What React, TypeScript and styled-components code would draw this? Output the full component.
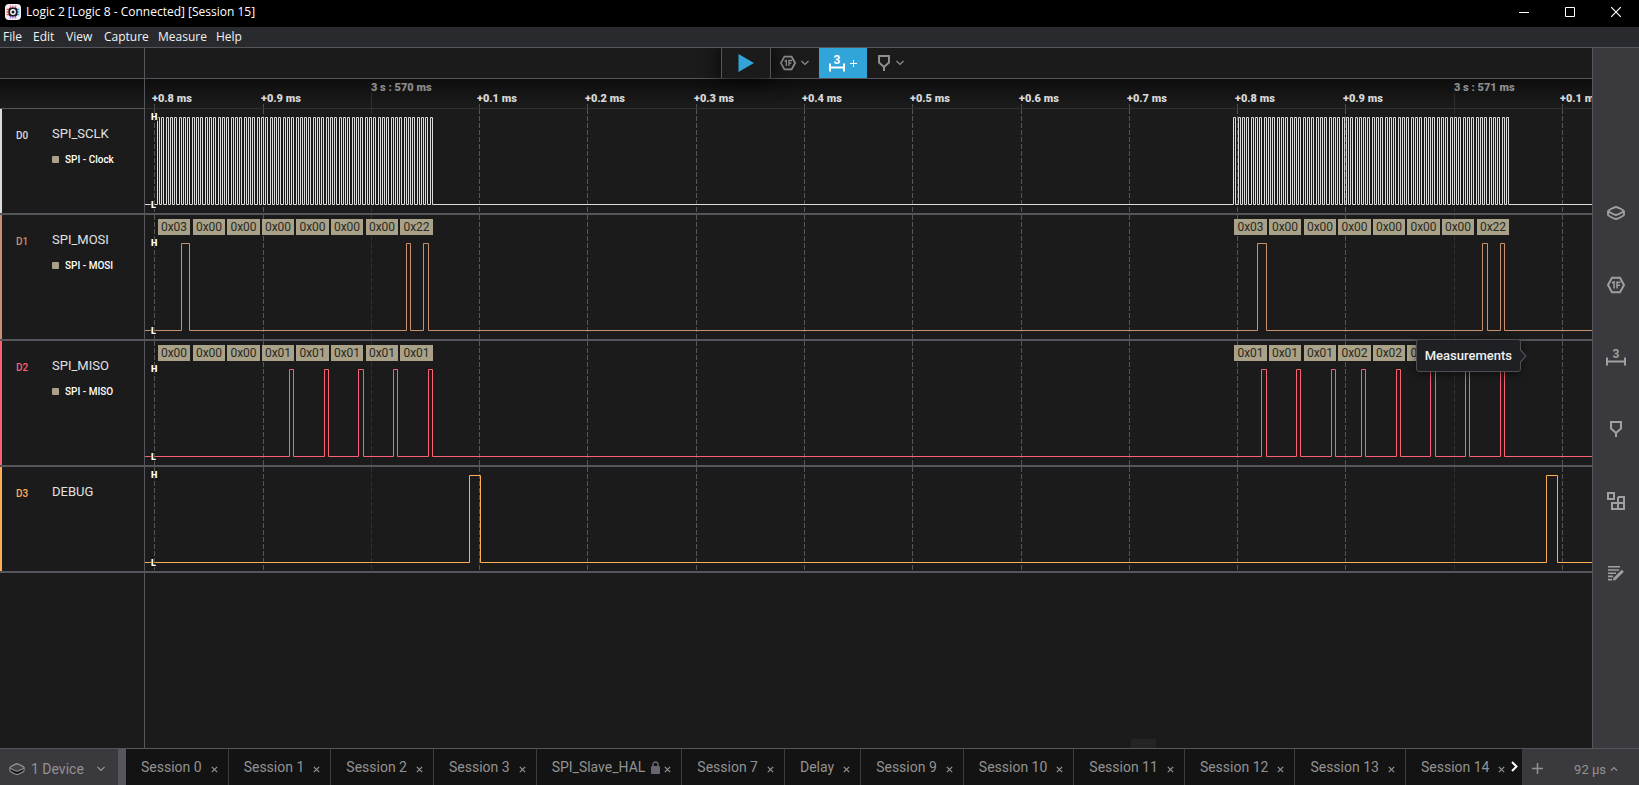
import React from "react";
import styled, { createGlobalStyle, css } from "styled-components";

const GlobalStyle = createGlobalStyle`
  * { box-sizing: border-box; }
  body { margin: 0; background: #1b1b1b; font-family: Roboto, "Liberation Sans", sans-serif; }
  button { margin: 0; padding: 0; border: 0; background: none; color: inherit; font: inherit; cursor: pointer; }
`;

const line = "#55555b";

const Window = styled.div`
  display: flex;
  flex-direction: column;
  min-height: 100vh;
  overflow: hidden;
  color: #e0e0e0;
`;

const TitleBar = styled.header`
  display: flex;
  align-items: center;
  height: 27px;
  padding: 0 0 4px 5px;
  background: #000;
  color: #fff;
`;

const Title = styled.h1`
  flex: 1;
  margin: 0;
  padding-left: 5px;
  font: 400 12px/16px "Open Sans", "Noto Sans", sans-serif;
`;

const WindowButton = styled.button`
  display: flex;
  align-items: center;
  justify-content: center;
  width: 46px;
  height: 22px;
`;

const MenuBar = styled.nav`
  display: flex;
  height: 21px;
  background: #292a2e;
  border-bottom: 1px solid ${line};
`;

const MenuItem = styled.button<{ $width: number }>`
  width: ${(p) => p.$width}px;
  padding-left: 3px;
  text-align: left;
  color: #f2f2f2;
  font: 400 12px/20px "Open Sans", "Noto Sans", sans-serif;
`;

const Body = styled.div`
  display: flex;
  flex: 1;
`;

const Main = styled.main`
  display: flex;
  flex-direction: column;
  flex: 1;
  min-width: 0;
`;

const Gutter = styled.div`
  flex: none;
  width: 145px;
  border-right: 1px solid ${line};
`;

const ToolbarRow = styled.div`
  display: flex;
  height: 31px;
  border-bottom: 1px solid ${line};
`;

const Toolbar = styled.div`
  display: flex;
  flex: 1;
  justify-content: center;
`;

const ToolGroup = styled.div`
  display: flex;
  width: 296px;
`;

const ToolButton = styled.button<{ $kind?: "play" | "active" }>`
  display: flex;
  align-items: center;
  justify-content: center;
  gap: 5px;
  width: 48px;
  height: 30px;
  color: #8f8f8f;
  ${(p) =>
    p.$kind === "play" &&
    css`
      width: 50px;
      border: solid ${line};
      border-width: 0 1px;
      color: #31a4d9;
      box-shadow: 0 0 20px 2px rgba(0, 0, 0, 0.8);
      clip-path: inset(0 -30px -30px -30px);
    `}
  ${(p) =>
    p.$kind === "active" &&
    css`
      background: #31a4d9;
      color: #fff;
    `}
`;

const RulerRow = styled.div`
  display: flex;
  height: 30px;
  background: linear-gradient(#0d0d0d, #1b1b1b 26px);
`;

const RulerGutter = styled(Gutter)`
  border-bottom: 1px solid ${line};
`;

const Ruler = styled.div`
  position: relative;
  flex: 1;
  overflow: hidden;
  border-bottom: 1px solid #303035;
`;

const TickLabel = styled.span<{ $major?: boolean }>`
  position: absolute;
  top: ${(p) => (p.$major ? 2 : 13)}px;
  color: ${(p) => (p.$major ? "#8d8d8d" : "#d8d8d8")};
  font-size: 11px;
  line-height: 13px;
  font-weight: 900;
  white-space: pre;
`;

const Tick = styled.i<{ $major?: boolean }>`
  position: absolute;
  top: ${(p) => (p.$major ? 14 : 25)}px;
  bottom: 0;
  width: 1px;
  background: ${(p) => (p.$major ? "#2e2e2e" : "#4c4c4c")};
`;

const ChannelRow = styled.section<{ $tall?: boolean }>`
  display: flex;
  height: ${(p) => (p.$tall ? 126 : 106)}px;
  border-bottom: 2px solid ${line};
`;

const ChannelHead = styled(Gutter)<{ $color: string }>`
  display: grid;
  grid-template-columns: 36px 1fr;
  grid-template-rows: 16px 16px;
  align-items: center;
  row-gap: 10px;
  padding: 16px 0 0 14px;
  border-left: 2px solid ${(p) => p.$color};
`;

const ChannelId = styled.span<{ $color: string }>`
  padding-top: 4px;
  color: ${(p) => p.$color};
  font-size: 10px;
  font-weight: 500;
`;

const ChannelName = styled.span`
  color: #e2e2e2;
  font-size: 13px;
`;

const AnalyzerTag = styled.span`
  display: flex;
  grid-column: 2;
  align-items: center;
  gap: 6px;
  color: #fff;
  font-size: 10px;
  font-weight: 500;
  &::before {
    content: "";
    width: 7px;
    height: 7px;
    border-radius: 1px;
    background: #a9a288;
  }
`;

const Track = styled.div`
  position: relative;
  flex: 1;
  overflow: hidden;
`;

const Plot = styled.svg`
  display: block;
  width: 100%;
  height: 100%;
`;

const LevelMark = styled.span<{ $at: number }>`
  position: absolute;
  top: ${(p) => p.$at - 5}px;
  left: 6px;
  color: #fff;
  font-size: 9px;
  line-height: 11px;
  font-weight: 900;
  text-shadow: 0 0 2px #1b1b1b, 0 0 2px #1b1b1b, 1px 1px 1px #1b1b1b;
`;

const Byte = styled.span`
  position: absolute;
  top: 4px;
  height: 16px;
  background: #a9a288;
  color: #2a2922;
  font-size: 12px;
  line-height: 16px;
  text-align: center;
`;

const Rest = styled.div`
  display: flex;
  flex: 1;
`;

const ScrollArea = styled.div`
  display: flex;
  flex: 1;
  align-items: flex-end;
`;

const ScrollThumb = styled.div`
  width: 25px;
  height: 9px;
  margin-left: 68.15%;
  background: #242424;
`;

const Sidebar = styled.aside`
  display: flex;
  flex: none;
  flex-direction: column;
  justify-content: center;
  width: 47px;
  padding-bottom: 10px;
  border-left: 1px solid ${line};
  background: #3a393e;
`;

const PanelButton = styled.button`
  position: relative;
  display: flex;
  align-items: center;
  justify-content: center;
  height: 72px;
  color: #a0a0a0;
`;

const Tooltip = styled.span`
  position: absolute;
  right: calc(100% + 72px);
  top: 18px;
  height: 33px;
  padding: 0 8px;
  border: 1px solid #4e4f55;
  border-radius: 3px;
  background: #1f2024;
  box-shadow: 0 2px 8px rgba(0, 0, 0, 0.5);
  color: #f0f0f0;
  font-size: 13px;
  line-height: 31px;
  font-weight: 500;
`;

const TooltipArrow = styled.svg`
  position: absolute;
  left: 100%;
  top: 9px;
`;

const StatusBar = styled.footer`
  display: flex;
  height: 37px;
  border-top: 1px solid ${line};
  background: #131313;
  color: #929292;
  font-size: 14px;
`;

const DeviceButton = styled.button`
  display: flex;
  flex: none;
  align-items: center;
  width: 126px;
  padding: 4px 0 0 9px;
  gap: 6px;
  border-right: 8px solid ${line};
  background: #3a393e;
  > svg:last-child { margin-left: 7px; }
`;

const Tabs = styled.div`
  display: flex;
  flex: 1;
  min-width: 0;
  overflow: hidden;
`;

const Tab = styled.div`
  display: flex;
  flex: none;
  align-items: center;
  height: 36px;
  padding: 0 10px 0 15px;
  border-right: 1px solid #3c3c40;
  &:last-child { border: 0; }
`;

const TabClose = styled.button`
  display: flex;
  padding: 4px 0 0 9px;
`;

const Lock = styled.svg`
  margin: 0 -5px 0 6px;
`;

const TabScroll = styled.button`
  flex: none;
  width: 12px;
  padding-right: 3px;
  color: #fff;
`;

const Controls = styled.div`
  display: flex;
  flex: none;
  align-items: center;
  justify-content: space-between;
  width: 117px;
  padding: 4px 21px 0 10px;
  background: #3a393e;
  font-size: 13px;
`;

const Zoom = styled.button`
  display: flex;
  align-items: center;
  gap: 4px;
`;

const Chevron = ({ up }: { up?: boolean }) => (
  <svg width="8" height="6" viewBox="0 0 8 6" fill="none" stroke="currentColor" strokeWidth="1.2">
    <path d={up ? "M1 4.5 4 1.5 7 4.5" : "M0.5 1 4 4.5 7.5 1"} />
  </svg>
);

const HexIcon = ({ size }: { size: number }) => (
  <svg width={size} height={size} viewBox="0 0 18 18" fill="none" stroke="currentColor">
    <path d="M5 1.800h8L17 9l-4 7.200H5L1 9Z" strokeWidth="2" />
    <path d="M5 7 7.100 5.900V12.500M10 12.500V6.200h3.500M10 9.200h3" strokeWidth="1.500" />
  </svg>
);

const MeasureIcon = ({ width = 20 }: { width?: number }) => (
  <svg width={width} height="18" viewBox={`0 0 ${width} 18`} fill="none" stroke="currentColor">
    <path d={`M1 9.500v8M${width - 1} 9.500v8M1 13.500h${width - 2}`} strokeWidth="2" />
    <text x={width / 2} y="9.500" textAnchor="middle" fill="currentColor" stroke="none" fontSize="12" fontWeight="700">
      3
    </text>
  </svg>
);

const PinIcon = () => (
  <svg width="14" height="18" viewBox="0 0 14 18" fill="none" stroke="currentColor" strokeWidth="2">
    <path d="M2 2h10v6.500l-5 4.500-5-4.500ZM7 13v4" />
  </svg>
);

const StackIcon = ({ size = 18, dark }: { size?: number; dark?: boolean }) => (
  <svg width={size} height={(size * 14) / 18} viewBox="0 0 18 14" fill="none" stroke="currentColor" strokeWidth={dark ? 1.2 : 1.800}>
    <path
      d="M1 5.300C1 4.300 7.500 1 9 1s8 3.300 8 4.300v3.400c0 1-6.500 4.300-8 4.300S1 9.700 1 8.700Z"
      fill={dark ? "#18181a" : "none"}
    />
    <path
      d={dark ? "M1 5.300C1 4.300 7.500 1 9 1s8 3.300 8 4.300-6.500 3.900-8 3.900-8-2.900-8-3.900Z" : "M1.500 5.500C2.500 6.300 7.500 9 9 9s6.500-2.700 7.500-3.500"}
      fill={dark ? "#444448" : "none"}
    />
  </svg>
);

const BlocksIcon = () => (
  <svg width="18" height="18" viewBox="0 0 18 18" fill="none" stroke="currentColor" strokeWidth="2">
    <path d="M1 1h6v6H1ZM11 5h6v12H5v-6h12M11 5v12" />
  </svg>
);

const NotesIcon = () => (
  <svg width="16" height="16" viewBox="0 0 16 16" fill="none" stroke="currentColor" strokeWidth="1.600">
    <path d="M0 1.800h12M0 5h11M0 8.200h8M0 11.400h5M0 14.600h4" />
    <path d="M7 13.500 14.800 5.700" strokeWidth="3" />
    <path d="M5 15.500 8.400 15 5.500 12.100Z" fill="currentColor" stroke="none" />
  </svg>
);

const CloseGlyph = () => (
  <svg width="7" height="7" viewBox="0 0 7 7" stroke="currentColor" strokeWidth="1.200">
    <path d="M0.800 0.800 6.200 6.200M6.200 0.800 0.800 6.200" />
  </svg>
);

const Logo = () => (
  <svg width="16" height="16" viewBox="0 0 16 16">
    <rect width="16" height="16" rx="4" fill="#f2f2f6" />
    <g strokeWidth="1.400">
      <path d="M5.500 1.500v3M8 1.500v3M10.500 1.500v3" stroke="#ef7c8b" />
      <path d="M5.500 11.500v3M8 11.500v3M10.500 11.500v3" stroke="#b26be8" />
      <path d="M1.500 5.500h3M1.500 8h3M1.500 10.500h3" stroke="#ee5a4a" />
      <path d="M11.500 5.500h3M11.500 8h3M11.500 10.500h3" stroke="#3b9fe6" />
    </g>
    <rect x="3.500" y="3.500" width="9" height="9" rx="3" fill="#17171c" />
    <circle cx="8" cy="8" r="2.200" fill="none" stroke="#fff" strokeWidth="1.400" />
  </svg>
);

/* Time axis: pixel position of the first division and the pixels per 0.1 ms. */
const AXIS_START = 9.3;
const DIVISION = 108.28;
const divisions = Array.from({ length: 14 }, (_, i) => {
  const step = (i + 8) % 10;
  return {
    x: Math.round(AXIS_START + DIVISION * i),
    major: step === 0,
    label: step === 0 ? `3 s : ${i < 10 ? 570 : 571} ms` : `+0.${step} ms`,
  };
});

/* Eight bytes of eight clock pulses, each pulse two pixels wide. */
const clockBurst = (start: number): [number, number][] =>
  Array.from({ length: 64 }, (_, k) => {
    const rise = Math.round(start + 4.325 * k);
    return [rise, rise + 2];
  });

const BYTE_PITCH = 34.6;
const bytesAt = (start: number, values: string[]) =>
  values.map((value, i) => {
    const left = Math.round(start + BYTE_PITCH * i);
    return { value, left, width: Math.round(start + BYTE_PITCH * i + 32.4) - left };
  });

type Channel = {
  id: string;
  name: string;
  analyzer?: string;
  color: string;
  pulses: [number, number][];
  bytes?: ReturnType<typeof bytesAt>;
};

const channels: Channel[] = [
  {
    id: "D0",
    name: "SPI_SCLK",
    analyzer: "SPI - Clock",
    color: "#dcdcdc",
    pulses: [...clockBurst(12.1), ...clockBurst(1088.4)],
  },
  {
    id: "D1",
    name: "SPI_MOSI",
    analyzer: "SPI - MOSI",
    color: "#c9906f",
    pulses: [[36, 44], [261, 265], [278, 283], [1112, 1121], [1337, 1342], [1355, 1359]],
    bytes: [
      ...bytesAt(13, ["0x03", "0x00", "0x00", "0x00", "0x00", "0x00", "0x00", "0x22"]),
      ...bytesAt(1089.3, ["0x03", "0x00", "0x00", "0x00", "0x00", "0x00", "0x00", "0x22"]),
    ],
  },
  {
    id: "D2",
    name: "SPI_MISO",
    analyzer: "SPI - MISO",
    color: "#fb6175",
    pulses: [
      [144, 148], [179, 183], [213, 218], [248, 252], [283, 287],
      [1116, 1121], [1151, 1155], [1186, 1190], [1216, 1220], [1251, 1255], [1285, 1290], [1320, 1324], [1355, 1359],
    ],
    bytes: [
      ...bytesAt(13, ["0x00", "0x00", "0x00", "0x01", "0x01", "0x01", "0x01", "0x01"]),
      ...bytesAt(1089.3, ["0x01", "0x01", "0x01", "0x02", "0x02", "0x02", "0x02", "0x02"]),
    ],
  },
  {
    id: "D3",
    name: "DEBUG",
    color: "#fdae53",
    pulses: [[324, 335], [1401, 1412]],
  },
];

const wavePath = (pulses: [number, number][], high: number, low: number) =>
  `M0 ${low + 0.5}` +
  pulses.map(([rise, fall]) => `H${rise + 0.5}V${high + 0.5}H${fall + 0.5}V${low + 0.5}`).join("") +
  "H6000";

const ChannelView = ({ channel }: { channel: Channel }) => {
  const tall = Boolean(channel.bytes);
  const high = tall ? 28 : 8;
  const low = high + 87;
  return (
    <ChannelRow $tall={tall}>
      <ChannelHead $color={channel.color}>
        <ChannelId $color={channel.color}>{channel.id}</ChannelId>
        <ChannelName>{channel.name}</ChannelName>
        {channel.analyzer && <AnalyzerTag>{channel.analyzer}</AnalyzerTag>}
      </ChannelHead>
      <Track>
        <Plot aria-label={`${channel.name} waveform`}>
          {divisions.map((d) => (
            <line
              key={d.x}
              x1={d.x + 0.5}
              x2={d.x + 0.5}
              y1="0"
              y2="124"
              stroke={d.major ? "#303030" : "#565656"}
              strokeDasharray="5 2"
            />
          ))}
          <path d={wavePath(channel.pulses, high, low)} fill="none" stroke={channel.color} />
        </Plot>
        {channel.bytes?.map((b) => (
          <Byte key={b.left} style={{ left: b.left, width: b.width }}>
            {b.value}
          </Byte>
        ))}
        <LevelMark $at={high}>H</LevelMark>
        <LevelMark $at={low + 1}>L</LevelMark>
      </Track>
    </ChannelRow>
  );
};

const menus: [string, number][] = [
  ["File", 30], ["Edit", 33], ["View", 38], ["Capture", 54], ["Measure", 58], ["Help", 40],
];

const sessions = [
  "Session 0", "Session 1", "Session 2", "Session 3", "SPI_Slave_HAL", "Session 7", "Delay",
  "Session 9", "Session 10", "Session 11", "Session 12", "Session 13", "Session 14",
];

export default function App() {
  return (
    <Window>
      <GlobalStyle />
      <TitleBar>
        <Logo />
        <Title>Logic 2 [Logic 8 - Connected] [Session 15]</Title>
        <WindowButton aria-label="Minimize">
          <svg width="10" height="10" stroke="#fff"><path d="M0 5.500h10" /></svg>
        </WindowButton>
        <WindowButton aria-label="Maximize">
          <svg width="10" height="10" stroke="#fff" fill="none"><path d="M0.500 0.500h9v9h-9Z" /></svg>
        </WindowButton>
        <WindowButton aria-label="Close">
          <svg width="10" height="10" stroke="#fff" strokeWidth="1.200"><path d="M0 0 10 10M10 0 0 10" /></svg>
        </WindowButton>
      </TitleBar>
      <MenuBar>
        {menus.map(([label, width]) => (
          <MenuItem key={label} $width={width}>{label}</MenuItem>
        ))}
      </MenuBar>
      <Body>
        <Main>
          <ToolbarRow>
            <Gutter />
            <Toolbar>
              <ToolGroup>
                <ToolButton $kind="play" aria-label="Start capture">
                  <svg width="16" height="18" fill="currentColor"><path d="M0.500 0 16 9 0.500 18Z" /></svg>
                </ToolButton>
                <ToolButton aria-label="Add analyzer">
                  <HexIcon size={16} />
                  <Chevron />
                </ToolButton>
                <ToolButton $kind="active" aria-label="Add measurement">
                  <MeasureIcon width={16} />
                  <svg width="7" height="7" stroke="currentColor"><path d="M3.500 0v7M0 3.500h7" /></svg>
                </ToolButton>
                <ToolButton aria-label="Add marker">
                  <PinIcon />
                  <Chevron />
                </ToolButton>
              </ToolGroup>
            </Toolbar>
          </ToolbarRow>
          <RulerRow>
            <RulerGutter />
            <Ruler>
              {divisions.map((d) => (
                <React.Fragment key={d.x}>
                  <Tick $major={d.major} style={{ left: d.x }} />
                  <TickLabel $major={d.major} style={{ left: d.major ? d.x : d.x - 2 }}>
                    {d.label}
                  </TickLabel>
                </React.Fragment>
              ))}
            </Ruler>
          </RulerRow>
          {channels.map((c) => (
            <ChannelView key={c.id} channel={c} />
          ))}
          <Rest>
            <Gutter />
            <ScrollArea>
              <ScrollThumb />
            </ScrollArea>
          </Rest>
        </Main>
        <Sidebar>
          <PanelButton aria-label="Device"><StackIcon /></PanelButton>
          <PanelButton aria-label="Analyzers"><HexIcon size={18} /></PanelButton>
          <PanelButton aria-label="Measurements">
            <MeasureIcon />
            <Tooltip role="tooltip">
              Measurements
              <TooltipArrow width="8" height="14" viewBox="0 0 8 14">
                <path d="M0 1 6 7 0 13Z" fill="#1f2024" />
                <path d="M0.500 1 6 7 0.500 13" fill="none" stroke="#4e4f55" strokeWidth="1.200" />
              </TooltipArrow>
            </Tooltip>
          </PanelButton>
          <PanelButton aria-label="Timing markers"><PinIcon /></PanelButton>
          <PanelButton aria-label="Extensions"><BlocksIcon /></PanelButton>
          <PanelButton aria-label="Notes"><NotesIcon /></PanelButton>
        </Sidebar>
      </Body>
      <StatusBar>
        <DeviceButton>
          <StackIcon size={16} dark />
          1 Device
          <Chevron />
        </DeviceButton>
        <Tabs>
          {sessions.map((name) => (
            <Tab key={name}>
              {name}
              {name === "SPI_Slave_HAL" && (
                <Lock width="9" height="13" viewBox="0 0 9 13">
                  <rect y="5" width="9" height="8" rx="1" fill="#67666f" />
                  <path d="M2 6V3.500a2.500 2.500 0 0 1 5 0V6" fill="none" stroke="#67666f" strokeWidth="1.400" />
                </Lock>
              )}
              <TabClose aria-label={`Close ${name}`}><CloseGlyph /></TabClose>
            </Tab>
          ))}
        </Tabs>
        <TabScroll aria-label="More sessions">
          <svg width="7" height="11" viewBox="0 0 7 11" fill="none" stroke="currentColor" strokeWidth="2">
            <path d="M1 1 5.500 5.500 1 10" />
          </svg>
        </TabScroll>
        <Controls>
          <button aria-label="New session">
            <svg width="11" height="11" stroke="currentColor" strokeWidth="1.500"><path d="M5.500 0v11M0 5.500h11" /></svg>
          </button>
          <Zoom>92 µs <Chevron up /></Zoom>
        </Controls>
      </StatusBar>
    </Window>
  );
}
